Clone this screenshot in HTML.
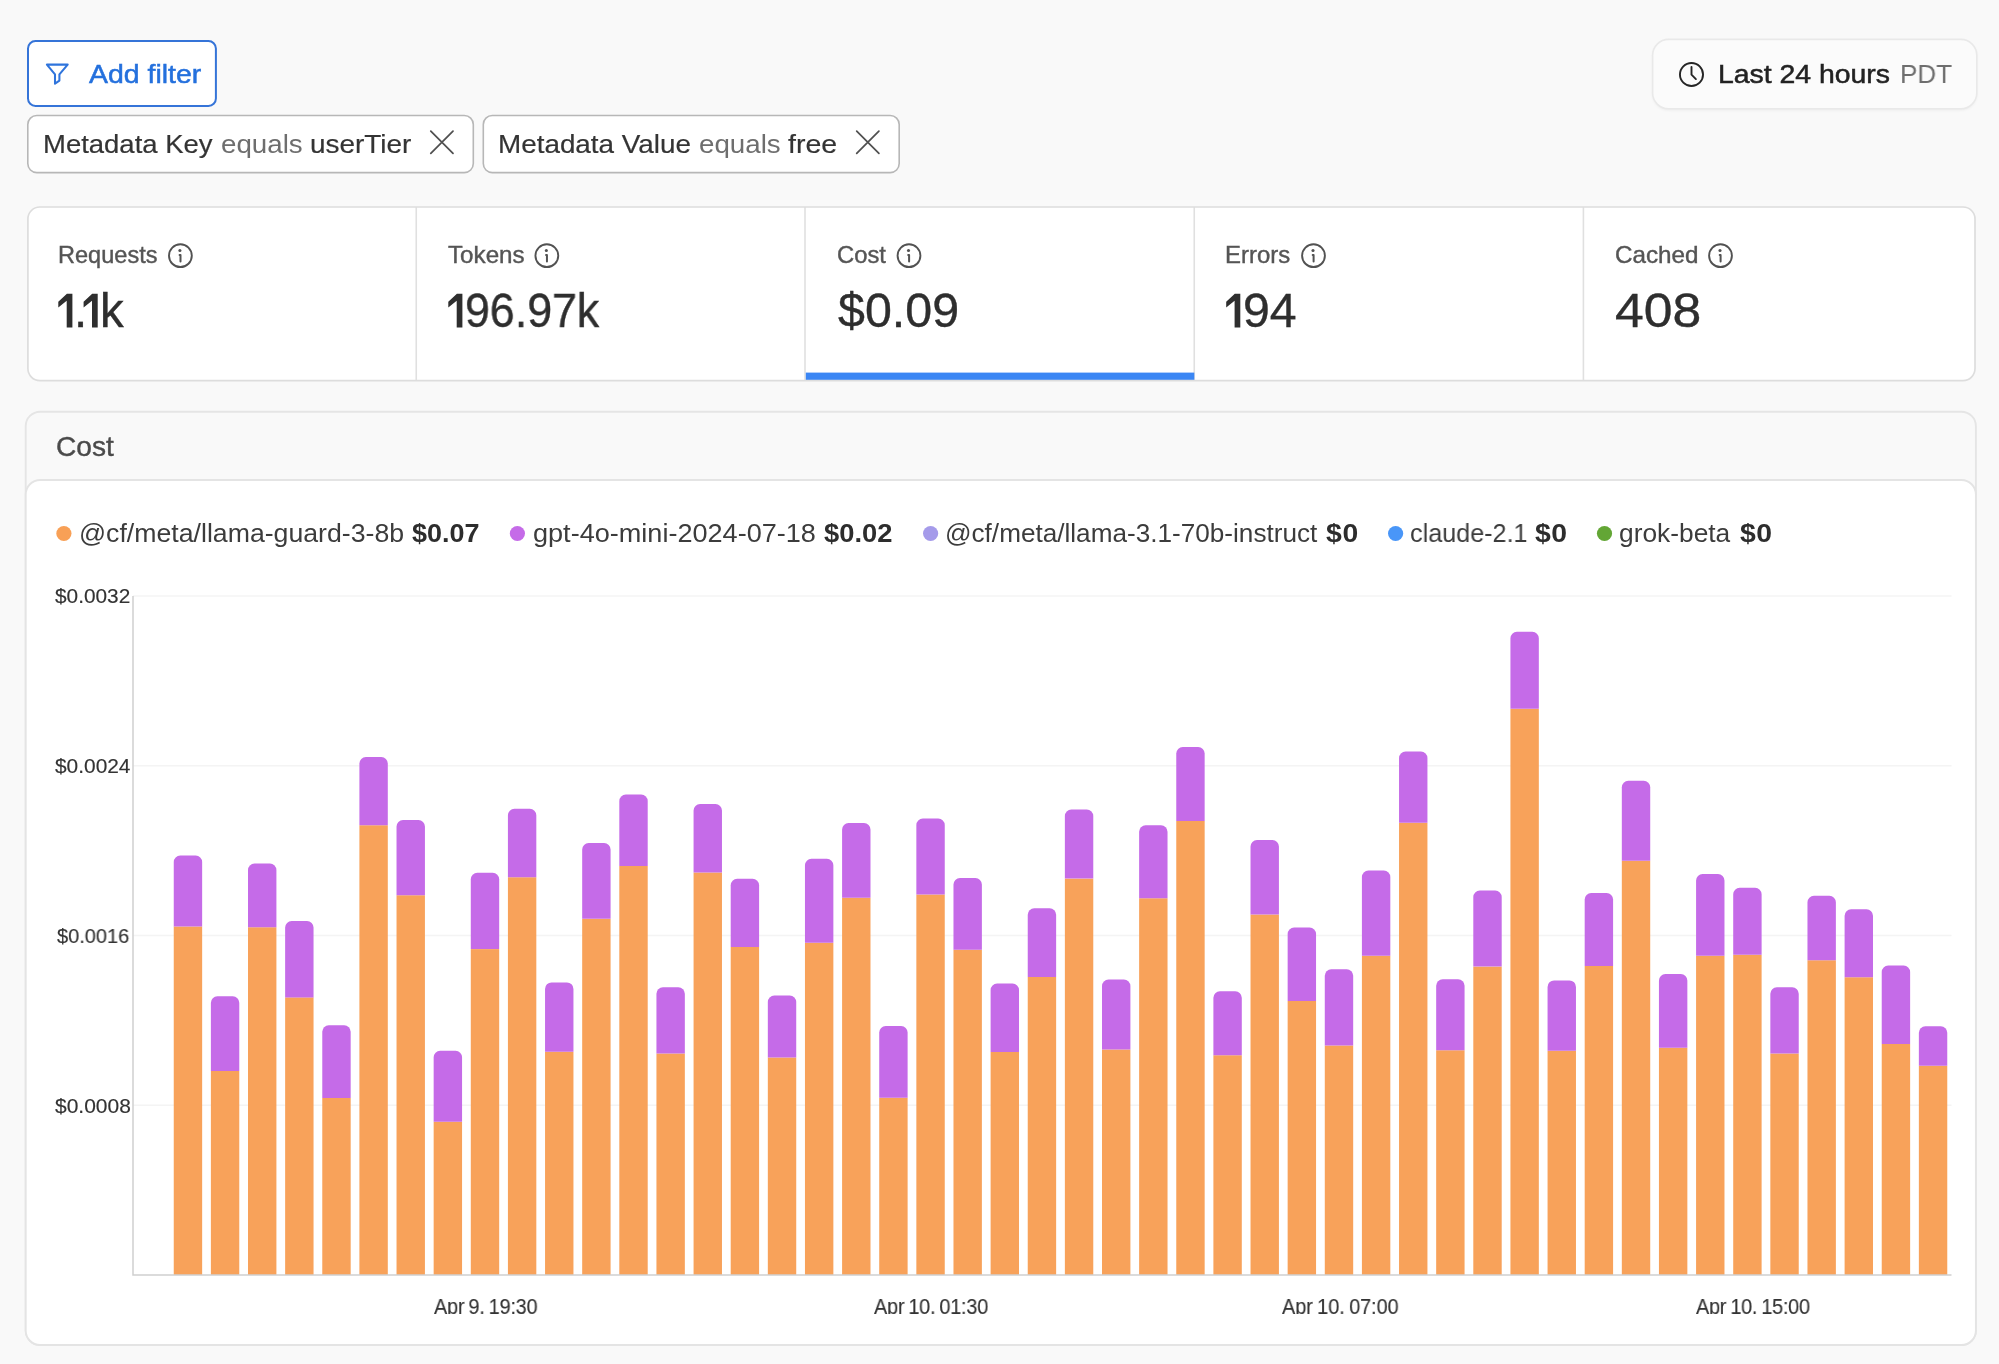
<!DOCTYPE html>
<html><head><meta charset="utf-8"><title>Cost analytics</title>
<style>
html,body{margin:0;padding:0}
body{width:1999px;height:1364px;overflow:hidden;background:#f9f9f9;position:relative;font-family:"Liberation Sans",sans-serif}
.a{position:absolute;box-sizing:border-box}
.t{position:absolute;white-space:nowrap;line-height:1;will-change:transform;transform-origin:0 50%;font-family:"Liberation Sans",sans-serif}
</style></head><body>
<svg class="a" style="left:0;top:0" width="1999" height="1364" viewBox="0 0 1999 1364">

<defs><filter id="sh" x="-5%" y="-20%" width="110%" height="150%"><feGaussianBlur stdDeviation="1.6"/></filter></defs>
<!-- add filter button -->
<rect x="28" y="41.1" width="187.9" height="64.8" rx="7.5" fill="#fff" stroke="#3574d8" stroke-width="2"/>
<path transform="translate(42,60)" d="M4.9,4.6H25.7L17.4,14.4V20.6L13.0,23.6V14.4Z" fill="none" stroke="#2f74dc" stroke-width="2.05" stroke-linejoin="round"/>
<!-- chips -->
<rect x="27.8" y="115.5" width="445.5" height="57.1" rx="9" fill="#fff" stroke="#b7b7b7" stroke-width="1.6"/>
<rect x="483.3" y="115.5" width="415.9" height="57.1" rx="9" fill="#fff" stroke="#b7b7b7" stroke-width="1.6"/>
<path d="M430.80,131.20L453.00,153.40M453.00,131.20L430.80,153.40" stroke="#505050" stroke-width="1.75" stroke-linecap="round" fill="none"/>
<path d="M856.70,131.10L878.90,153.30M878.90,131.10L856.70,153.30" stroke="#505050" stroke-width="1.75" stroke-linecap="round" fill="none"/>
<!-- time pill -->
<rect x="1652.6" y="40.6" width="324.2" height="69.6" rx="16" fill="#000" opacity="0.055" filter="url(#sh)"/>
<rect x="1652.6" y="39.4" width="324.2" height="69.4" rx="16" fill="#fbfbfb" stroke="#e9e9e9" stroke-width="1.6"/>
<g transform="translate(1691.5,74.5)"><circle r="11.55" fill="none" stroke="#252525" stroke-width="1.9"/>
<path d="M0,-7.6V0.2L4.4,4.6" fill="none" stroke="#252525" stroke-width="1.9" stroke-linecap="round" stroke-linejoin="round"/></g>
<!-- stats panel -->
<clipPath id="sp"><rect x="27.9" y="207" width="1947.1" height="173.6" rx="12"/></clipPath>
<rect x="27.9" y="207" width="1947.1" height="173.6" rx="12" fill="#fff"/>
<g clip-path="url(#sp)">
<path d="M416.25,207V381M805,207V381M1194.25,207V381M1583.4,207V381" stroke="#e0e0e0" stroke-width="1.6" fill="none"/>
<rect x="805.8" y="372.6" width="388.5" height="8" fill="#3b86f4"/>
</g>
<rect x="27.9" y="207" width="1947.1" height="173.6" rx="12" fill="none" stroke="#dddddd" stroke-width="1.7"/>
<path transform="translate(58.3,293.80)" d="M8.6,0H14.1V33.6H8.4V7.0L0,13.6V7.9Z" fill="#2e2e2e"/><path transform="translate(83.6,293.80)" d="M8.6,0H14.1V33.6H8.4V7.0L0,13.6V7.9Z" fill="#2e2e2e"/><path transform="translate(448.3,293.80)" d="M8.6,0H14.1V33.6H8.4V7.0L0,13.6V7.9Z" fill="#2e2e2e"/><path transform="translate(1226.2,293.80)" d="M8.6,0H14.1V33.6H8.4V7.0L0,13.6V7.9Z" fill="#2e2e2e"/>
<g transform="translate(180.40,255.65)"><circle r="11.4" fill="none" stroke="#525252" stroke-width="1.9"/><circle cx="-0.5" cy="-5.1" r="1.55" fill="#525252"/><path d="M-0.8,-0.55H0.1V5.9" fill="none" stroke="#525252" stroke-width="2" stroke-linecap="round" stroke-linejoin="round"/></g><g transform="translate(546.85,255.65)"><circle r="11.4" fill="none" stroke="#525252" stroke-width="1.9"/><circle cx="-0.5" cy="-5.1" r="1.55" fill="#525252"/><path d="M-0.8,-0.55H0.1V5.9" fill="none" stroke="#525252" stroke-width="2" stroke-linecap="round" stroke-linejoin="round"/></g><g transform="translate(909.00,255.65)"><circle r="11.4" fill="none" stroke="#525252" stroke-width="1.9"/><circle cx="-0.5" cy="-5.1" r="1.55" fill="#525252"/><path d="M-0.8,-0.55H0.1V5.9" fill="none" stroke="#525252" stroke-width="2" stroke-linecap="round" stroke-linejoin="round"/></g><g transform="translate(1313.50,255.65)"><circle r="11.4" fill="none" stroke="#525252" stroke-width="1.9"/><circle cx="-0.5" cy="-5.1" r="1.55" fill="#525252"/><path d="M-0.8,-0.55H0.1V5.9" fill="none" stroke="#525252" stroke-width="2" stroke-linecap="round" stroke-linejoin="round"/></g><g transform="translate(1720.50,255.65)"><circle r="11.4" fill="none" stroke="#525252" stroke-width="1.9"/><circle cx="-0.5" cy="-5.1" r="1.55" fill="#525252"/><path d="M-0.8,-0.55H0.1V5.9" fill="none" stroke="#525252" stroke-width="2" stroke-linecap="round" stroke-linejoin="round"/></g>
<!-- chart card -->
<rect x="25.7" y="411.7" width="1950.2" height="933.3" rx="14.5" fill="#f9f9f9" stroke="#e5e5e5" stroke-width="1.9"/>
<rect x="25.7" y="480" width="1950.2" height="865" rx="14.5" fill="#fff" stroke="#e4e4e4" stroke-width="1.9"/>
<circle cx="63.9" cy="533.5" r="7.6" fill="#f8a056"/><circle cx="517.4" cy="533.5" r="7.6" fill="#c56be8"/><circle cx="930.6" cy="533.5" r="7.6" fill="#a59bea"/><circle cx="1395.6" cy="533.5" r="7.6" fill="#4996f8"/><circle cx="1604.5" cy="533.5" r="7.6" fill="#63a635"/>

<line x1="133" y1="596" x2="1951.5" y2="596" stroke="#f4f4f4" stroke-width="1.5"/>
<line x1="133" y1="765.75" x2="1951.5" y2="765.75" stroke="#f4f4f4" stroke-width="1.5"/>
<line x1="133" y1="935.5" x2="1951.5" y2="935.5" stroke="#f4f4f4" stroke-width="1.5"/>
<line x1="133" y1="1105.25" x2="1951.5" y2="1105.25" stroke="#f4f4f4" stroke-width="1.5"/>
<rect x="173.75" y="926.50" width="28.4" height="348.50" fill="#f8a25a"/>
<path d="M173.75,926.50V862.00a6.5,6.5 0 0 1 6.5,-6.5h15.40a6.5,6.5 0 0 1 6.5,6.5V926.50Z" fill="#c56be8"/>
<rect x="210.88" y="1071.00" width="28.4" height="204.00" fill="#f8a25a"/>
<path d="M210.88,1071.00V1002.75a6.5,6.5 0 0 1 6.5,-6.5h15.40a6.5,6.5 0 0 1 6.5,6.5V1071.00Z" fill="#c56be8"/>
<rect x="248.01" y="927.25" width="28.4" height="347.75" fill="#f8a25a"/>
<path d="M248.01,927.25V870.00a6.5,6.5 0 0 1 6.5,-6.5h15.40a6.5,6.5 0 0 1 6.5,6.5V927.25Z" fill="#c56be8"/>
<rect x="285.14" y="997.40" width="28.4" height="277.60" fill="#f8a25a"/>
<path d="M285.14,997.40V927.50a6.5,6.5 0 0 1 6.5,-6.5h15.40a6.5,6.5 0 0 1 6.5,6.5V997.40Z" fill="#c56be8"/>
<rect x="322.27" y="1098.00" width="28.4" height="177.00" fill="#f8a25a"/>
<path d="M322.27,1098.00V1031.75a6.5,6.5 0 0 1 6.5,-6.5h15.40a6.5,6.5 0 0 1 6.5,6.5V1098.00Z" fill="#c56be8"/>
<rect x="359.40" y="825.25" width="28.4" height="449.75" fill="#f8a25a"/>
<path d="M359.40,825.25V763.50a6.5,6.5 0 0 1 6.5,-6.5h15.40a6.5,6.5 0 0 1 6.5,6.5V825.25Z" fill="#c56be8"/>
<rect x="396.53" y="895.25" width="28.4" height="379.75" fill="#f8a25a"/>
<path d="M396.53,895.25V826.50a6.5,6.5 0 0 1 6.5,-6.5h15.40a6.5,6.5 0 0 1 6.5,6.5V895.25Z" fill="#c56be8"/>
<rect x="433.66" y="1121.75" width="28.4" height="153.25" fill="#f8a25a"/>
<path d="M433.66,1121.75V1057.25a6.5,6.5 0 0 1 6.5,-6.5h15.40a6.5,6.5 0 0 1 6.5,6.5V1121.75Z" fill="#c56be8"/>
<rect x="470.79" y="949.10" width="28.4" height="325.90" fill="#f8a25a"/>
<path d="M470.79,949.10V879.25a6.5,6.5 0 0 1 6.5,-6.5h15.40a6.5,6.5 0 0 1 6.5,6.5V949.10Z" fill="#c56be8"/>
<rect x="507.92" y="877.25" width="28.4" height="397.75" fill="#f8a25a"/>
<path d="M507.92,877.25V815.25a6.5,6.5 0 0 1 6.5,-6.5h15.40a6.5,6.5 0 0 1 6.5,6.5V877.25Z" fill="#c56be8"/>
<rect x="545.05" y="1051.75" width="28.4" height="223.25" fill="#f8a25a"/>
<path d="M545.05,1051.75V988.90a6.5,6.5 0 0 1 6.5,-6.5h15.40a6.5,6.5 0 0 1 6.5,6.5V1051.75Z" fill="#c56be8"/>
<rect x="582.18" y="918.80" width="28.4" height="356.20" fill="#f8a25a"/>
<path d="M582.18,918.80V849.50a6.5,6.5 0 0 1 6.5,-6.5h15.40a6.5,6.5 0 0 1 6.5,6.5V918.80Z" fill="#c56be8"/>
<rect x="619.31" y="866.00" width="28.4" height="409.00" fill="#f8a25a"/>
<path d="M619.31,866.00V801.00a6.5,6.5 0 0 1 6.5,-6.5h15.40a6.5,6.5 0 0 1 6.5,6.5V866.00Z" fill="#c56be8"/>
<rect x="656.44" y="1053.50" width="28.4" height="221.50" fill="#f8a25a"/>
<path d="M656.44,1053.50V993.75a6.5,6.5 0 0 1 6.5,-6.5h15.40a6.5,6.5 0 0 1 6.5,6.5V1053.50Z" fill="#c56be8"/>
<rect x="693.57" y="872.50" width="28.4" height="402.50" fill="#f8a25a"/>
<path d="M693.57,872.50V810.50a6.5,6.5 0 0 1 6.5,-6.5h15.40a6.5,6.5 0 0 1 6.5,6.5V872.50Z" fill="#c56be8"/>
<rect x="730.70" y="947.00" width="28.4" height="328.00" fill="#f8a25a"/>
<path d="M730.70,947.00V885.25a6.5,6.5 0 0 1 6.5,-6.5h15.40a6.5,6.5 0 0 1 6.5,6.5V947.00Z" fill="#c56be8"/>
<rect x="767.83" y="1057.50" width="28.4" height="217.50" fill="#f8a25a"/>
<path d="M767.83,1057.50V1002.00a6.5,6.5 0 0 1 6.5,-6.5h15.40a6.5,6.5 0 0 1 6.5,6.5V1057.50Z" fill="#c56be8"/>
<rect x="804.96" y="942.75" width="28.4" height="332.25" fill="#f8a25a"/>
<path d="M804.96,942.75V865.25a6.5,6.5 0 0 1 6.5,-6.5h15.40a6.5,6.5 0 0 1 6.5,6.5V942.75Z" fill="#c56be8"/>
<rect x="842.09" y="897.75" width="28.4" height="377.25" fill="#f8a25a"/>
<path d="M842.09,897.75V829.50a6.5,6.5 0 0 1 6.5,-6.5h15.40a6.5,6.5 0 0 1 6.5,6.5V897.75Z" fill="#c56be8"/>
<rect x="879.22" y="1097.75" width="28.4" height="177.25" fill="#f8a25a"/>
<path d="M879.22,1097.75V1032.50a6.5,6.5 0 0 1 6.5,-6.5h15.40a6.5,6.5 0 0 1 6.5,6.5V1097.75Z" fill="#c56be8"/>
<rect x="916.35" y="894.50" width="28.4" height="380.50" fill="#f8a25a"/>
<path d="M916.35,894.50V825.00a6.5,6.5 0 0 1 6.5,-6.5h15.40a6.5,6.5 0 0 1 6.5,6.5V894.50Z" fill="#c56be8"/>
<rect x="953.48" y="949.75" width="28.4" height="325.25" fill="#f8a25a"/>
<path d="M953.48,949.75V884.50a6.5,6.5 0 0 1 6.5,-6.5h15.40a6.5,6.5 0 0 1 6.5,6.5V949.75Z" fill="#c56be8"/>
<rect x="990.61" y="1052.00" width="28.4" height="223.00" fill="#f8a25a"/>
<path d="M990.61,1052.00V990.00a6.5,6.5 0 0 1 6.5,-6.5h15.40a6.5,6.5 0 0 1 6.5,6.5V1052.00Z" fill="#c56be8"/>
<rect x="1027.74" y="977.00" width="28.4" height="298.00" fill="#f8a25a"/>
<path d="M1027.74,977.00V914.75a6.5,6.5 0 0 1 6.5,-6.5h15.40a6.5,6.5 0 0 1 6.5,6.5V977.00Z" fill="#c56be8"/>
<rect x="1064.87" y="878.60" width="28.4" height="396.40" fill="#f8a25a"/>
<path d="M1064.87,878.60V816.00a6.5,6.5 0 0 1 6.5,-6.5h15.40a6.5,6.5 0 0 1 6.5,6.5V878.60Z" fill="#c56be8"/>
<rect x="1102.00" y="1049.50" width="28.4" height="225.50" fill="#f8a25a"/>
<path d="M1102.00,1049.50V986.00a6.5,6.5 0 0 1 6.5,-6.5h15.40a6.5,6.5 0 0 1 6.5,6.5V1049.50Z" fill="#c56be8"/>
<rect x="1139.13" y="898.25" width="28.4" height="376.75" fill="#f8a25a"/>
<path d="M1139.13,898.25V831.75a6.5,6.5 0 0 1 6.5,-6.5h15.40a6.5,6.5 0 0 1 6.5,6.5V898.25Z" fill="#c56be8"/>
<rect x="1176.26" y="821.00" width="28.4" height="454.00" fill="#f8a25a"/>
<path d="M1176.26,821.00V753.50a6.5,6.5 0 0 1 6.5,-6.5h15.40a6.5,6.5 0 0 1 6.5,6.5V821.00Z" fill="#c56be8"/>
<rect x="1213.39" y="1055.25" width="28.4" height="219.75" fill="#f8a25a"/>
<path d="M1213.39,1055.25V997.75a6.5,6.5 0 0 1 6.5,-6.5h15.40a6.5,6.5 0 0 1 6.5,6.5V1055.25Z" fill="#c56be8"/>
<rect x="1250.52" y="914.50" width="28.4" height="360.50" fill="#f8a25a"/>
<path d="M1250.52,914.50V846.50a6.5,6.5 0 0 1 6.5,-6.5h15.40a6.5,6.5 0 0 1 6.5,6.5V914.50Z" fill="#c56be8"/>
<rect x="1287.65" y="1001.00" width="28.4" height="274.00" fill="#f8a25a"/>
<path d="M1287.65,1001.00V934.00a6.5,6.5 0 0 1 6.5,-6.5h15.40a6.5,6.5 0 0 1 6.5,6.5V1001.00Z" fill="#c56be8"/>
<rect x="1324.78" y="1045.50" width="28.4" height="229.50" fill="#f8a25a"/>
<path d="M1324.78,1045.50V975.75a6.5,6.5 0 0 1 6.5,-6.5h15.40a6.5,6.5 0 0 1 6.5,6.5V1045.50Z" fill="#c56be8"/>
<rect x="1361.91" y="955.75" width="28.4" height="319.25" fill="#f8a25a"/>
<path d="M1361.91,955.75V877.00a6.5,6.5 0 0 1 6.5,-6.5h15.40a6.5,6.5 0 0 1 6.5,6.5V955.75Z" fill="#c56be8"/>
<rect x="1399.04" y="822.75" width="28.4" height="452.25" fill="#f8a25a"/>
<path d="M1399.04,822.75V758.00a6.5,6.5 0 0 1 6.5,-6.5h15.40a6.5,6.5 0 0 1 6.5,6.5V822.75Z" fill="#c56be8"/>
<rect x="1436.17" y="1050.25" width="28.4" height="224.75" fill="#f8a25a"/>
<path d="M1436.17,1050.25V985.75a6.5,6.5 0 0 1 6.5,-6.5h15.40a6.5,6.5 0 0 1 6.5,6.5V1050.25Z" fill="#c56be8"/>
<rect x="1473.30" y="966.60" width="28.4" height="308.40" fill="#f8a25a"/>
<path d="M1473.30,966.60V897.00a6.5,6.5 0 0 1 6.5,-6.5h15.40a6.5,6.5 0 0 1 6.5,6.5V966.60Z" fill="#c56be8"/>
<rect x="1510.43" y="708.80" width="28.4" height="566.20" fill="#f8a25a"/>
<path d="M1510.43,708.80V638.30a6.5,6.5 0 0 1 6.5,-6.5h15.40a6.5,6.5 0 0 1 6.5,6.5V708.80Z" fill="#c56be8"/>
<rect x="1547.56" y="1050.75" width="28.4" height="224.25" fill="#f8a25a"/>
<path d="M1547.56,1050.75V986.90a6.5,6.5 0 0 1 6.5,-6.5h15.40a6.5,6.5 0 0 1 6.5,6.5V1050.75Z" fill="#c56be8"/>
<rect x="1584.69" y="966.00" width="28.4" height="309.00" fill="#f8a25a"/>
<path d="M1584.69,966.00V899.50a6.5,6.5 0 0 1 6.5,-6.5h15.40a6.5,6.5 0 0 1 6.5,6.5V966.00Z" fill="#c56be8"/>
<rect x="1621.82" y="860.75" width="28.4" height="414.25" fill="#f8a25a"/>
<path d="M1621.82,860.75V787.25a6.5,6.5 0 0 1 6.5,-6.5h15.40a6.5,6.5 0 0 1 6.5,6.5V860.75Z" fill="#c56be8"/>
<rect x="1658.95" y="1047.75" width="28.4" height="227.25" fill="#f8a25a"/>
<path d="M1658.95,1047.75V980.50a6.5,6.5 0 0 1 6.5,-6.5h15.40a6.5,6.5 0 0 1 6.5,6.5V1047.75Z" fill="#c56be8"/>
<rect x="1696.08" y="955.75" width="28.4" height="319.25" fill="#f8a25a"/>
<path d="M1696.08,955.75V880.50a6.5,6.5 0 0 1 6.5,-6.5h15.40a6.5,6.5 0 0 1 6.5,6.5V955.75Z" fill="#c56be8"/>
<rect x="1733.21" y="954.75" width="28.4" height="320.25" fill="#f8a25a"/>
<path d="M1733.21,954.75V894.25a6.5,6.5 0 0 1 6.5,-6.5h15.40a6.5,6.5 0 0 1 6.5,6.5V954.75Z" fill="#c56be8"/>
<rect x="1770.34" y="1053.50" width="28.4" height="221.50" fill="#f8a25a"/>
<path d="M1770.34,1053.50V993.75a6.5,6.5 0 0 1 6.5,-6.5h15.40a6.5,6.5 0 0 1 6.5,6.5V1053.50Z" fill="#c56be8"/>
<rect x="1807.47" y="960.25" width="28.4" height="314.75" fill="#f8a25a"/>
<path d="M1807.47,960.25V902.25a6.5,6.5 0 0 1 6.5,-6.5h15.40a6.5,6.5 0 0 1 6.5,6.5V960.25Z" fill="#c56be8"/>
<rect x="1844.60" y="977.25" width="28.4" height="297.75" fill="#f8a25a"/>
<path d="M1844.60,977.25V915.75a6.5,6.5 0 0 1 6.5,-6.5h15.40a6.5,6.5 0 0 1 6.5,6.5V977.25Z" fill="#c56be8"/>
<rect x="1881.73" y="1044.00" width="28.4" height="231.00" fill="#f8a25a"/>
<path d="M1881.73,1044.00V972.00a6.5,6.5 0 0 1 6.5,-6.5h15.40a6.5,6.5 0 0 1 6.5,6.5V1044.00Z" fill="#c56be8"/>
<rect x="1918.86" y="1065.75" width="28.4" height="209.25" fill="#f8a25a"/>
<path d="M1918.86,1065.75V1032.75a6.5,6.5 0 0 1 6.5,-6.5h15.40a6.5,6.5 0 0 1 6.5,6.5V1065.75Z" fill="#c56be8"/>
<path d="M133,596V1275H1951.5" fill="none" stroke="#d0d0d0" stroke-width="1.5"/>
</svg>
<div class="a" style="left:0;top:1280px;width:1999px;height:33.6px;overflow:hidden">
<span class="t" style="left:434.30px;top:16.68px;font-size:21.4px;color:#333;letter-spacing:-0.249px;word-spacing:-1.2px;transform:scaleX(0.9300);-webkit-text-stroke:0.15px #333;">Apr 9, 19:30</span>
<span class="t" style="left:874.00px;top:16.68px;font-size:21.4px;color:#333;letter-spacing:-0.269px;word-spacing:-1.2px;transform:scaleX(0.9300);-webkit-text-stroke:0.15px #333;">Apr 10, 01:30</span>
<span class="t" style="left:1281.50px;top:16.68px;font-size:21.4px;color:#333;letter-spacing:-0.045px;word-spacing:-1.2px;transform:scaleX(0.9300);-webkit-text-stroke:0.15px #333;">Apr 10, 07:00</span>
<span class="t" style="left:1696.00px;top:16.68px;font-size:21.4px;color:#333;letter-spacing:-0.287px;word-spacing:-1.2px;transform:scaleX(0.9300);-webkit-text-stroke:0.15px #333;">Apr 10, 15:00</span>
</div>
<span class="t" style="left:89.38px;top:60.82px;font-size:26.2px;color:#2470dd;transform:scaleX(1.0871);-webkit-text-stroke:0.5px #2470dd;">Add filter</span>
<span class="t" style="left:43.26px;top:131.28px;font-size:26.6px;color:#343434;transform:scaleX(1.0330);-webkit-text-stroke:0.2px #343434;">Metadata Key</span>
<span class="t" style="left:220.75px;top:131.28px;font-size:26.6px;color:#6e6e6e;transform:scaleX(1.0422);">equals</span>
<span class="t" style="left:310.08px;top:131.28px;font-size:26.6px;color:#343434;transform:scaleX(1.0503);-webkit-text-stroke:0.2px #343434;">userTier</span>
<span class="t" style="left:498.23px;top:131.28px;font-size:26.6px;color:#343434;transform:scaleX(1.0466);-webkit-text-stroke:0.2px #343434;">Metadata Value</span>
<span class="t" style="left:698.75px;top:131.28px;font-size:26.6px;color:#6e6e6e;transform:scaleX(1.0422);">equals</span>
<span class="t" style="left:788.42px;top:131.28px;font-size:26.6px;color:#343434;transform:scaleX(1.0715);-webkit-text-stroke:0.2px #343434;">free</span>
<span class="t" style="left:1717.97px;top:61.48px;font-size:26.6px;color:#222;transform:scaleX(1.0670);-webkit-text-stroke:0.5px #222;">Last 24 hours</span>
<span class="t" style="left:1900.34px;top:61.48px;font-size:26.6px;color:#6e6e6e;transform:scaleX(0.9778);">PDT</span>
<span class="t" style="left:58.13px;top:244.26px;font-size:23.2px;color:#555;transform:scaleX(1.0159);-webkit-text-stroke:0.4px #555;">Requests</span>
<span class="t" style="left:448.21px;top:244.26px;font-size:23.2px;color:#555;transform:scaleX(1.0434);-webkit-text-stroke:0.4px #555;">Tokens</span>
<span class="t" style="left:836.84px;top:244.26px;font-size:23.2px;color:#555;transform:scaleX(1.0261);-webkit-text-stroke:0.4px #555;">Cost</span>
<span class="t" style="left:1225.31px;top:244.26px;font-size:23.2px;color:#555;transform:scaleX(1.0322);-webkit-text-stroke:0.4px #555;">Errors</span>
<span class="t" style="left:1615.12px;top:244.26px;font-size:23.2px;color:#555;transform:scaleX(1.0451);-webkit-text-stroke:0.4px #555;">Cached</span>
<span class="t" style="left:74.32px;top:287.28px;font-size:47.4px;color:#2e2e2e;-webkit-text-stroke:0.38px #2e2e2e;">.</span>
<span class="t" style="left:99.90px;top:287.28px;font-size:47.4px;color:#2e2e2e;-webkit-text-stroke:0.38px #2e2e2e;">k</span>
<span class="t" style="left:465.45px;top:287.28px;font-size:47.4px;color:#2e2e2e;transform:scaleX(0.9436);-webkit-text-stroke:0.38px #2e2e2e;">96.97k</span>
<span class="t" style="left:837.73px;top:287.28px;font-size:47.4px;color:#2e2e2e;transform:scaleX(1.0209);-webkit-text-stroke:0.38px #2e2e2e;">$0.09</span>
<span class="t" style="left:1243.09px;top:287.28px;font-size:47.4px;color:#2e2e2e;transform:scaleX(1.0173);-webkit-text-stroke:0.38px #2e2e2e;">94</span>
<span class="t" style="left:1614.82px;top:287.28px;font-size:47.4px;color:#2e2e2e;transform:scaleX(1.0905);-webkit-text-stroke:0.38px #2e2e2e;">408</span>
<span class="t" style="left:56.30px;top:432.87px;font-size:27.8px;color:#4a4a4a;transform:scaleX(1.0118);-webkit-text-stroke:0.4px #4a4a4a;">Cost</span>
<span class="t" style="left:78.59px;top:521.06px;font-size:25.8px;color:#3c3c3c;transform:scaleX(1.0342);">@cf/meta/llama-guard-3-8b</span>
<span class="t" style="left:411.95px;top:521.06px;font-size:25.8px;color:#2d2d2d;font-weight:700;transform:scaleX(1.0447);">$0.07</span>
<span class="t" style="left:532.55px;top:521.06px;font-size:25.8px;color:#3c3c3c;transform:scaleX(1.0495);">gpt-4o-mini-2024-07-18</span>
<span class="t" style="left:824.44px;top:521.06px;font-size:25.8px;color:#2d2d2d;font-weight:700;transform:scaleX(1.0591);">$0.02</span>
<span class="t" style="left:944.88px;top:521.06px;font-size:25.8px;color:#3c3c3c;transform:scaleX(1.0133);">@cf/meta/llama-3.1-70b-instruct</span>
<span class="t" style="left:1325.67px;top:521.06px;font-size:25.8px;color:#2d2d2d;font-weight:700;letter-spacing:0.551px;transform:scaleX(1.1000);">$0</span>
<span class="t" style="left:1410.11px;top:521.06px;font-size:25.8px;color:#3c3c3c;transform:scaleX(0.9760);">claude-2.1</span>
<span class="t" style="left:1534.92px;top:521.06px;font-size:25.8px;color:#2d2d2d;font-weight:700;letter-spacing:0.324px;transform:scaleX(1.1000);">$0</span>
<span class="t" style="left:1619.34px;top:521.06px;font-size:25.8px;color:#3c3c3c;transform:scaleX(1.0207);">grok-beta</span>
<span class="t" style="left:1739.92px;top:521.06px;font-size:25.8px;color:#2d2d2d;font-weight:700;letter-spacing:0.324px;transform:scaleX(1.1000);">$0</span>
<span class="t" style="left:55.31px;top:586.20px;font-size:20.2px;color:#333;transform:scaleX(1.0310);-webkit-text-stroke:0.15px #333;">$0.0032</span>
<span class="t" style="left:55.06px;top:756.20px;font-size:20.2px;color:#333;transform:scaleX(1.0340);-webkit-text-stroke:0.15px #333;">$0.0024</span>
<span class="t" style="left:57.07px;top:926.20px;font-size:20.2px;color:#333;transform:scaleX(0.9900);-webkit-text-stroke:0.15px #333;">$0.0016</span>
<span class="t" style="left:55.05px;top:1095.70px;font-size:20.2px;color:#333;transform:scaleX(1.0395);-webkit-text-stroke:0.15px #333;">$0.0008</span>
</body></html>
